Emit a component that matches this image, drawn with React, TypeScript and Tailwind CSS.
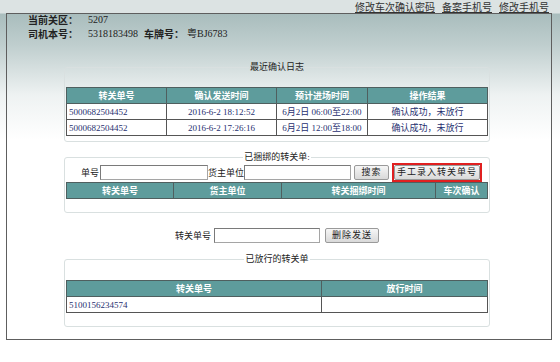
const recent = [
  { no: '5000682504452', sent: '2016-6-2 18:12:52', plan: '6月2日 06:00至22:00', result: '确认成功，未放行' },
  { no: '5000682504452', sent: '2016-6-2 17:26:16', plan: '6月2日 12:00至18:00', result: '确认成功，未放行' },
];

const th = 'h-[16px] p-0 border border-[#4f5f5f] bg-[#5e9c9c] text-white font-bold text-center';
const td = 'h-[16px] p-0 border border-[#555] bg-white text-[#1f2f6f]';

const Btn = ({ label, w }: { label: string; w: string }) => (
  <button
    className={`${w} h-[15px] border border-[#9a9a9a] rounded-[2px] bg-[linear-gradient(180deg,#f6f6f6,#d9d9d9)] text-[9px] leading-[13px] text-[#222] tracking-[1px]`}
  >
    {label}
  </button>
);

const Input = ({ w }: { w: string }) => (
  <input
    className={`${w} h-[15px] bg-white border border-[#a5a5a5] border-t-[#7a7a7a] border-l-[#7a7a7a] outline-none`}
  />
);

export default function App() {
  return (
    <div className="w-[560px] h-[362px] overflow-hidden bg-[linear-gradient(180deg,#dce3e3_0px,#dce3e3_13px,#a9bdbd_14px,#bfcece_45px,#eef2f2_95px,#ffffff_140px)] font-['Liberation_Serif','Noto_Sans_CJK_SC',serif] text-[#222]">
      {/* top links */}
      <div className="h-[13px] flex justify-end items-end gap-[7px] pr-[11px] text-[10px] leading-[12px] font-['Noto_Sans_CJK_SC',sans-serif] text-[#333]">
        <a className="underline">修改车次确认密码</a>
        <a className="underline">备案手机号</a>
        <a className="underline">修改手机号</a>
      </div>

      <div className="ml-[6px] w-[546px] h-[327px] border border-[#5e5e5e]">
        {/* driver info */}
        <div className="h-[26px] pl-[21px] text-[10px] leading-[12px] flex flex-col justify-between">
          <div className="flex">
            <span className="w-[60px] font-bold font-['Noto_Sans_CJK_SC',sans-serif]">当前关区：</span>
            <span>5207</span>
          </div>
          <div className="flex">
            <span className="w-[60px] font-bold font-['Noto_Sans_CJK_SC',sans-serif]">司机本号：</span>
            <span className="w-[56px]">5318183498</span>
            <span className="w-[43px] font-bold font-['Noto_Sans_CJK_SC',sans-serif]">车牌号：</span>
            <span>粤BJ6783</span>
          </div>
        </div>

        {/* recent confirm log */}
        <fieldset className="mt-[21px] ml-[57px] w-[426px] border border-[#d9e0e0] rounded-[3px] px-[1px] pt-[14px] pb-[5px] text-[9px] leading-[12px]">
          <legend className="mx-auto px-[1px] text-[9px] leading-[12px] text-[#222]">最近确认日志</legend>
          <table className="w-full table-fixed border-collapse">
            <thead>
              <tr>
                <th className={`${th} w-[100px]`}>转关单号</th>
                <th className={`${th} w-[110px]`}>确认发送时间</th>
                <th className={`${th} w-[91px]`}>预计进场时间</th>
                <th className={th}>操作结果</th>
              </tr>
            </thead>
            <tbody>
              {recent.map((r, i) => (
                <tr key={i}>
                  <td className={`${td} pl-[2px]`}>{r.no}</td>
                  <td className={`${td} text-center`}>{r.sent}</td>
                  <td className={`${td} text-center whitespace-nowrap`}>{r.plan}</td>
                  <td className={`${td} text-center`}>{r.result}</td>
                </tr>
              ))}
            </tbody>
          </table>
        </fieldset>

        {/* bound forms */}
        <fieldset className="mt-[9px] ml-[57px] w-[426px] border border-[#d9e0e0] rounded-[3px] px-[1px] pt-0 pb-[13px] text-[9px] leading-[12px]">
          <legend className="mx-auto px-[1px] text-[9px] leading-[12px]">已捆绑的转关单:</legend>
          <div className="h-[19px] flex items-center pl-[15px]">
            <span className="mr-[1px]">单号</span>
            <Input w="w-[108px]" />
            <span className="w-[36px]">货主单位</span>
            <Input w="w-[107px]" />
            <div className="ml-[3px]">
              <Btn label="搜索" w="w-[35px]" />
            </div>
            <div className="ml-[3px] border-2 border-[#e02020] flex">
              <Btn label="手工录入转关单号" w="w-[86px]" />
            </div>
          </div>
          <table className="w-full table-fixed border-collapse">
            <thead>
              <tr>
                <th className={`${th} w-[107px]`}>转关单号</th>
                <th className={`${th} w-[108px]`}>货主单位</th>
                <th className={`${th} w-[154px]`}>转关捆绑时间</th>
                <th className={th}>车次确认</th>
              </tr>
            </thead>
          </table>
        </fieldset>

        {/* delete row */}
        <div className="mt-[15px] h-[15px] flex items-center justify-center text-[9px] leading-[12px] pr-[4px]">
          <span className="mr-[3px]">转关单号</span>
          <Input w="w-[106px]" />
          <div className="ml-[5px]">
            <Btn label="删除发送" w="w-[54px]" />
          </div>
        </div>

        {/* released forms */}
        <fieldset className="mt-[10px] ml-[57px] w-[426px] border border-[#d9e0e0] rounded-[3px] px-[1px] pt-[15px] pb-[13px] text-[9px] leading-[12px]">
          <legend className="mx-auto px-[1px] text-[9px] leading-[12px]">已放行的转关单</legend>
          <table className="w-full table-fixed border-collapse">
            <thead>
              <tr>
                <th className={`${th} w-[255px]`}>转关单号</th>
                <th className={th}>放行时间</th>
              </tr>
            </thead>
            <tbody>
              <tr>
                <td className={`${td} pl-[2px]`}>5100156234574</td>
                <td className={td}></td>
              </tr>
            </tbody>
          </table>
        </fieldset>
      </div>
    </div>
  );
}
